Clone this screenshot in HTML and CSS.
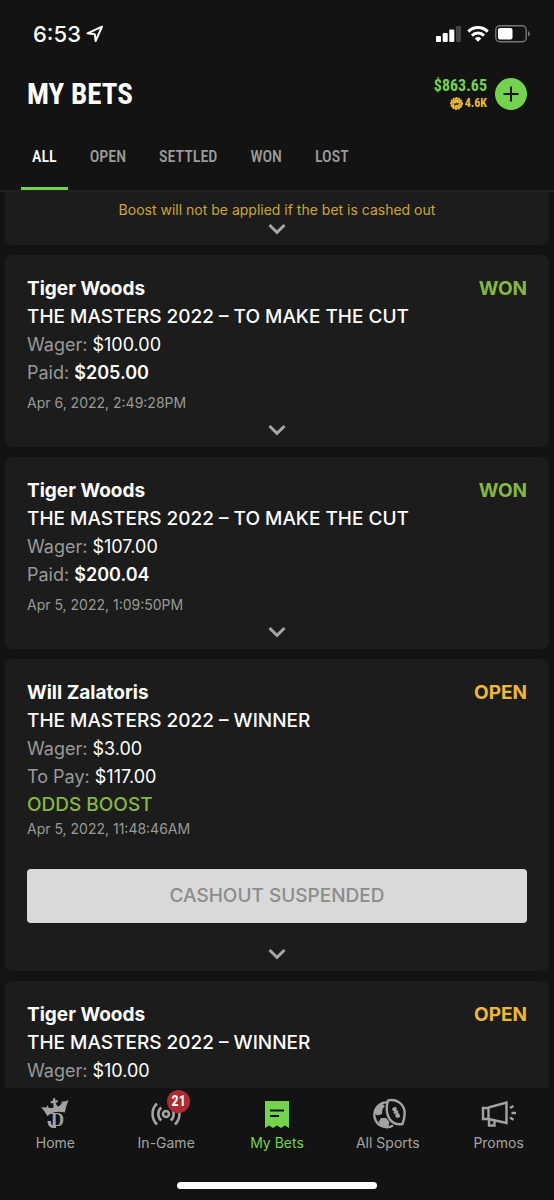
FILE: index.html
```html
<!DOCTYPE html>
<html lang="en">
<head>
<meta charset="utf-8">
<meta name="viewport" content="width=device-width, initial-scale=1">
<title>My Bets</title>
<link rel="stylesheet" href="styles.css">
</head>
<body>
<svg class="defs" width="0" height="0" aria-hidden="true">
  <symbol id="chevron" viewBox="0 0 18 12"><path d="M1.5 2 9 9.3 16.5 2" fill="none" stroke="currentColor" stroke-width="3"/></symbol>
</svg>

<header class="header">
  <div class="status">
    <div class="status-time">
      <span>6:53</span>
      <svg width="18" height="18" viewBox="0 0 18 18" aria-hidden="true"><path d="M1.5 8.3 16 1.7 9.6 16 8.8 9.3Z" fill="none" stroke="#fff" stroke-width="2" stroke-linejoin="round"/></svg>
    </div>
    <div class="status-icons">
      <svg width="25" height="16" viewBox="0 0 25 16" aria-hidden="true"><g fill="#fff"><rect x="0" y="10" width="5" height="6" rx="1"/><rect x="6.7" y="7" width="5" height="9" rx="1"/><rect x="13.3" y="3.5" width="5" height="12.5" rx="1"/></g><rect x="20" y="0" width="5" height="16" rx="1" fill="#444"/></svg>
      <svg width="22" height="16" viewBox="0 0 22 16" aria-hidden="true"><g fill="none" stroke="#fff" stroke-width="3"><path d="M1.3 5.6a13.8 13.8 0 0 1 19.4 0"/><path d="M5 9.6a8.5 8.5 0 0 1 12 0"/></g><path d="M7.7 12.4a4.8 4.8 0 0 1 6.600 0L11 15.800Z" fill="#fff"/></svg>
      <svg width="36" height="18" viewBox="0 0 36 18" aria-hidden="true"><rect x=".8" y=".8" width="30.4" height="16" rx="4" fill="none" stroke="#777" stroke-width="1.4"/><rect x="3" y="3" width="14.5" height="11.5" rx="2" fill="#fff"/><path d="M33 6q2 1 2 2.8T33 11.5Z" fill="#777"/></svg>
    </div>
  </div>
  <div class="title-row">
    <h1 class="title">MY BETS</h1>
    <div class="wallet">
      <div class="balances">
        <span class="cash">$863.65</span>
        <span class="crowns"><svg width="13" height="13" viewBox="0 0 13 13" aria-hidden="true"><circle cx="6.5" cy="6.5" r="5.6" fill="#f0bd3a"/><circle cx="6.5" cy="6.5" r="5.7" fill="none" stroke="#f0bd3a" stroke-width="1.4" stroke-dasharray="1.8 1"/><circle cx="6.5" cy="6.5" r="4" fill="none" stroke="#6e5213" stroke-width=".7" stroke-dasharray="1 1"/><path d="m3.5 6.3 2 .3 1-1.3.8 1 2.2-.8-1 2.3-4 .9Z" fill="#4a3609"/></svg>4.6K</span>
      </div>
      <button class="deposit" type="button" aria-label="Deposit"><svg width="32" height="32" viewBox="0 0 32 32" aria-hidden="true"><path d="M16 8.5v15M8.500 16h15" stroke="#141414" stroke-width="2"/></svg></button>
    </div>
  </div>
  <nav class="tabs" aria-label="Bet filters">
    <a class="tab tab-active" href="#all">ALL</a>
    <a class="tab" href="#open">OPEN</a>
    <a class="tab" href="#settled">SETTLED</a>
    <a class="tab" href="#won">WON</a>
    <a class="tab" href="#lost">LOST</a>
  </nav>
</header>

<main class="list">
  <article class="card card-tail">
    <p class="notice">Boost will not be applied if the bet is cashed out</p>
    <button class="expand" type="button" aria-label="Show details"><svg width="18" height="12"><use href="#chevron"/></svg></button>
  </article>

  <article class="card">
    <div class="card-head"><h2 class="name">Tiger Woods</h2><span class="state won">WON</span></div>
    <p class="event">THE MASTERS 2022 – TO MAKE THE CUT</p>
    <p class="line">Wager: <span class="amount">$100.00</span></p>
    <p class="line">Paid: <strong class="amount">$205.00</strong></p>
    <p class="date date-spaced">Apr 6, 2022, 2:49:28PM</p>
    <button class="expand" type="button" aria-label="Show details"><svg width="18" height="12"><use href="#chevron"/></svg></button>
  </article>

  <article class="card">
    <div class="card-head"><h2 class="name">Tiger Woods</h2><span class="state won">WON</span></div>
    <p class="event">THE MASTERS 2022 – TO MAKE THE CUT</p>
    <p class="line">Wager: <span class="amount">$107.00</span></p>
    <p class="line">Paid: <strong class="amount">$200.04</strong></p>
    <p class="date date-spaced">Apr 5, 2022, 1:09:50PM</p>
    <button class="expand" type="button" aria-label="Show details"><svg width="18" height="12"><use href="#chevron"/></svg></button>
  </article>

  <article class="card">
    <div class="card-head"><h2 class="name">Will Zalatoris</h2><span class="state open">OPEN</span></div>
    <p class="event">THE MASTERS 2022 – WINNER</p>
    <p class="line">Wager: <span class="amount">$3.00</span></p>
    <p class="line">To Pay: <span class="amount">$117.00</span></p>
    <p class="boost">ODDS BOOST</p>
    <p class="date">Apr 5, 2022, 11:48:46AM</p>
    <button class="cashout" type="button" disabled>CASHOUT SUSPENDED</button>
    <button class="expand" type="button" aria-label="Show details"><svg width="18" height="12"><use href="#chevron"/></svg></button>
  </article>

  <article class="card card-cut">
    <div class="card-head"><h2 class="name">Tiger Woods</h2><span class="state open">OPEN</span></div>
    <p class="event">THE MASTERS 2022 – WINNER</p>
    <p class="line">Wager: <span class="amount">$10.00</span></p>
  </article>
</main>

<footer class="footer">
  <nav class="nav" aria-label="Main">
    <a class="nav-item" href="#home">
      <svg class="crest" width="30" height="32" viewBox="0 0 30 32" fill="currentColor" aria-hidden="true"><path d="M13 1.5 15.300 1 15.200 3.400 17.600 3 17.800 5.400 15.600 5.600Q16.200 8.500 18 9.800 21 8.500 22 5.500L20.800 4.600Q25 5 28.500 3 26 9 24.800 15.500 15 12.800 7.200 19 5 14 1 10.300L6.300 10.500 7.300 8.200 8.800 10.800Q11 11.500 13.300 10.800 13.900 8.500 13.200 6L10.800 6.500 10.500 4.300 12.900 3.800Z"/><text x="11" y="29">D</text><path d="M7.500 24h3.500v2.500Q12 29.300 16 29v2Q7.500 32 7.500 24Z"/></svg>
      <span>Home</span>
    </a>
    <a class="nav-item" href="#in-game">
      <span class="icon-wrap">
        <svg width="32" height="32" viewBox="0 0 32 32" fill="none" stroke="currentColor" stroke-width="2.6" aria-hidden="true"><circle cx="16" cy="17" r="3"/><path d="M11.3 10.5a8.5 8.5 0 0 0 0 13M20.7 10.5a8.5 8.5 0 0 1 0 13M7 6.5a14.6 14.6 0 0 0 0 21M25 6.5a14.6 14.6 0 0 1 0 21"/></svg>
        <span class="badge">21</span>
      </span>
      <span>In-Game</span>
    </a>
    <a class="nav-item nav-active" href="#my-bets" aria-current="page">
      <svg width="32" height="32" viewBox="0 0 32 32" aria-hidden="true"><path d="M4 4h24v27l-4-2.5-4 2.5-4-2.5-4 2.5-4-2.5L4 31Z" fill="currentColor"/><path d="M9 13.5h14M9 19h9" stroke="#141414" stroke-width="2.2"/></svg>
      <span>My Bets</span>
    </a>
    <a class="nav-item" href="#all-sports">
      <svg width="36" height="32" viewBox="0 0 36 32" fill="none" stroke="currentColor" stroke-width="2.4" aria-hidden="true"><path d="M17 5.4A12.4 12.4 0 1 0 23 28.5"/><path d="M6 11 12 6.5l3 2.5-2.5 3-.5 5-4.500 1.500L4 16ZM11 21l5 0 3.5 4-1 4-6 .5-4-4.500Z" fill="currentColor" stroke="none"/><path d="M18 3.500C26 1.500 33.500 6.500 34.500 14c.5 4.500 0 8-2 13-5 .8-9.500-.5-12.500-4.500-3.500-5-4-12-2-19Z"/><path d="m23.500 10.500 5.500 10M22.500 13l4-2M24 16.200l4-2M25.500 19.500l4-2" stroke-width="2.600"/></svg>
      <span>All Sports</span>
    </a>
    <a class="nav-item" href="#promos">
      <svg width="36" height="32" viewBox="0 0 36 32" fill="none" stroke="currentColor" stroke-width="2.400" aria-hidden="true"><path d="M2 11h5.500v11H2ZM7.500 10.500l18-5v20.500l-18-4M8 22v6.500h5.500V24"/><path d="m29 11 3.500-2M30.500 16h4.500M29 20.500l3.500 2.300"/></svg>
      <span>Promos</span>
    </a>
  </nav>
  <div class="home-bar"></div>
</footer>
</body>
</html>
```

FILE: styles.css
```css
* { box-sizing: border-box; }

body {
  margin: 0;
  height: 100vh;
  display: flex;
  flex-direction: column;
  overflow: hidden;
  background: #131313;
  color: #fff;
  font-family: Inter, Roboto, "Liberation Sans", sans-serif;
  font-size: 18px;
  line-height: 28px;
}

h1, h2, p { margin: 0; }
svg { display: block; }
button { border: 0; padding: 0; font: inherit; }
a { color: inherit; text-decoration: none; }
.defs { position: absolute; }

.header { flex: none; border-bottom: 2px solid #202020; }

.status {
  display: flex;
  justify-content: space-between;
  align-items: center;
  padding: 20px 23px 0 33px;
}
.status-time {
  display: flex;
  align-items: center;
  gap: 5px;
  font-size: 22px;
  font-weight: 500;
}
.status-icons { display: flex; align-items: center; gap: 6px; }

.title-row {
  display: flex;
  justify-content: space-between;
  align-items: center;
  padding: 24px 27px 0;
  height: 68px;
}
.title, .wallet, .tabs, .badge {
  font-family: "Roboto Condensed", "Liberation Sans Narrow", sans-serif;
  font-weight: 700;
}
.title { font-size: 29px; line-height: 36px; }
.wallet { display: flex; align-items: center; gap: 8px; }
.balances { display: flex; flex-direction: column; align-items: flex-end; }
.cash { color: #74d24f; font-size: 16px; line-height: 18px; }
.crowns {
  display: flex;
  align-items: center;
  gap: 2px;
  color: #f0bd3a;
  font-size: 12px;
  line-height: 16px;
}
.deposit { width: 32px; height: 32px; border-radius: 50%; background: #74d24f; }

.tabs {
  display: flex;
  gap: 11px;
  padding: 8px 21px 0;
  font-size: 16px;
  font-weight: 500;
  color: #9b9b9b;
}
.tab { padding: 19px 11px 16px; border-bottom: 3px solid transparent; line-height: 28px; }
.tab-active { color: #fff; border-color: #74d24f; }

.list {
  flex: 1;
  min-height: 0;
  overflow: hidden;
  display: flex;
  flex-direction: column;
  gap: 10px;
  padding: 0 5px;
}
.card {
  flex: none;
  display: flex;
  flex-direction: column;
  padding: 20px 22px 0;
  border-radius: 7px;
  background: #1c1c1c;
}
.card-tail { padding-top: 8px; border-radius: 0 0 7px 7px; }
.card-cut { padding-bottom: 20px; }
.notice { color: #cda537; font-size: 14px; line-height: 20px; text-align: center; }
.card-tail .expand { height: 25px; padding-bottom: 8px; }
.card-head { display: flex; justify-content: space-between; }
.name { font-size: 19px; line-height: 28px; font-weight: 700; }
.state { font-size: 19px; font-weight: 700; }
.won, .boost { color: #84b840; }
.open { color: #efb73a; }
.event, .boost { font-size: 19px; font-weight: 500; }
.line { color: #999; }
.amount { color: #fff; }
strong.amount { font-weight: 600; }
.date { color: #999; font-size: 14px; line-height: 20px; }
.date-spaced { margin-top: 6px; }
.cashout {
  height: 54px;
  margin: 30px 0 14px;
  border-radius: 4px;
  background: #d9d9d9;
  color: #8c8c8c;
  font-size: 19px;
  font-weight: 500;
}
.expand {
  display: flex;
  align-items: center;
  justify-content: center;
  height: 34px;
  background: none;
  color: #a5a5a5;
}

.footer { flex: none; padding: 9px 0 11px; }
.nav { display: grid; grid-template-columns: repeat(5, 1fr); }
.nav-item {
  display: flex;
  flex-direction: column;
  align-items: center;
  gap: 4px;
  color: #a3a3a3;
  font-size: 14px;
  line-height: 20px;
}
.nav-active { color: #74d24f; }
.icon-wrap { position: relative; }
.badge {
  position: absolute;
  top: -7px;
  right: -8px;
  width: 23px;
  height: 23px;
  border-radius: 50%;
  background: #ad2c32;
  color: #fff;
  font-size: 14px;
  line-height: 23px;
  text-align: center;
}
.crest { font: 700 18px "Liberation Serif", serif; }
.home-bar {
  width: 36%;
  height: 7px;
  margin: 29px auto 0;
  border-radius: 4px;
  background: #fff;
}
```
